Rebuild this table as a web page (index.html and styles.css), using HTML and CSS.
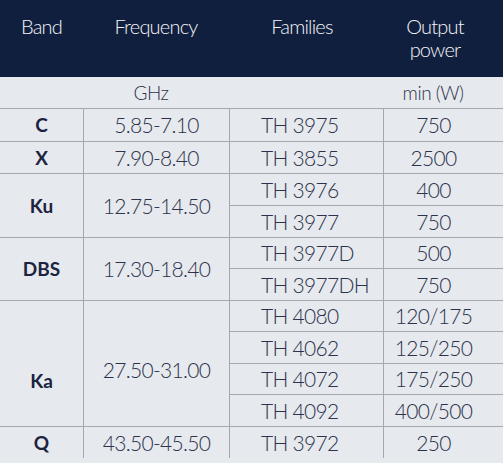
FILE: index.html
```html
<!DOCTYPE html>
<html>
<head>
<meta charset="utf-8">
<link rel="stylesheet" href="styles.css">
</head>
<body>
<table class="bands">
  <colgroup>
    <col class="c-band">
    <col class="c-freq">
    <col class="c-fam">
    <col class="c-pow">
  </colgroup>
  <thead>
    <tr class="head">
      <th>Band</th>
      <th>Frequency</th>
      <th class="fam-h">Families</th>
      <th class="pow">Output<br>power</th>
    </tr>
  </thead>
  <tbody>
    <tr class="units">
      <td></td>
      <td class="freq unit-ghz">GHz</td>
      <td></td>
      <td class="pow">min (W)</td>
    </tr>
    <tr class="h33">
      <td class="band">C</td>
      <td class="freq sep">5.85-7.10</td>
      <td class="fam sep">TH 3975</td>
      <td class="pow sep">750</td>
    </tr>
    <tr class="h32">
      <td class="band">X</td>
      <td class="freq sep">7.90-8.40</td>
      <td class="fam sep">TH 3855</td>
      <td class="pow sep">2500</td>
    </tr>
    <tr class="h32">
      <td class="band" rowspan="2">Ku</td>
      <td class="freq sep" rowspan="2">12.75-14.50</td>
      <td class="fam sep">TH 3976</td>
      <td class="pow sep">400</td>
    </tr>
    <tr class="h32">
      <td class="fam sep">TH 3977</td>
      <td class="pow sep">750</td>
    </tr>
    <tr class="h31">
      <td class="band" rowspan="2">DBS</td>
      <td class="freq sep" rowspan="2">17.30-18.40</td>
      <td class="fam sep">TH 3977D</td>
      <td class="pow sep">500</td>
    </tr>
    <tr class="h32">
      <td class="fam sep">TH 3977DH</td>
      <td class="pow sep">750</td>
    </tr>
    <tr class="h31">
      <td class="band ka" rowspan="4">Ka</td>
      <td class="freq sep ka-freq" rowspan="4">27.50-31.00</td>
      <td class="fam sep">TH 4080</td>
      <td class="pow sep">120/175</td>
    </tr>
    <tr class="h32">
      <td class="fam sep">TH 4062</td>
      <td class="pow sep">125/250</td>
    </tr>
    <tr class="h31">
      <td class="fam sep">TH 4072</td>
      <td class="pow sep">175/250</td>
    </tr>
    <tr class="h32">
      <td class="fam sep">TH 4092</td>
      <td class="pow sep">400/500</td>
    </tr>
    <tr class="h32">
      <td class="band">Q</td>
      <td class="freq sep">43.50-45.50</td>
      <td class="fam sep">TH 3972</td>
      <td class="pow sep">250</td>
    </tr>
  </tbody>
</table>
</body>
</html>
```
FILE: styles.css
```css
html, body {
  margin: 0;
  padding: 0;
  background: #e6e9ed;
  overflow: hidden;
}

.bands {
  width: 503px;
  table-layout: fixed;
  border-collapse: separate;
  border-spacing: 0;
  font-family: "Lato", "DejaVu Sans", sans-serif;
  font-weight: 300;
  color: #2c324b;
}

.c-band { width: 83px; }
.c-freq { width: 146px; }
.c-fam { width: 154px; }
.c-pow { width: 120px; }

.head th {
  background: #101f3e;
  color: #f4f5f8;
  font-weight: 300;
  font-size: 20px;
  letter-spacing: -0.8px;
  line-height: 23px;
  height: 77px;
  vertical-align: top;
  padding: 15px 0 0 0;
  box-sizing: border-box;
  text-align: center;
}

.head th.fam-h {
  padding-right: 8px;
}

.head th.pow {
  padding-right: 16px;
}

td {
  padding: 0;
  font-size: 21px;
  letter-spacing: -0.7px;
  line-height: 24px;
  vertical-align: middle;
  border-top: 1px solid #a3a8ae;
}

.units td {
  height: 31px;
  border-top: 0;
  font-size: 19px;
  letter-spacing: -0.5px;
}

.units .unit-ghz {
  padding-right: 10px;
}

.h33 { height: 33px; }
.h32 { height: 32px; }
.h31 { height: 31px; }

.sep {
  border-left: 1px solid #a3a8ae;
}

.band {
  text-align: center;
  font-weight: 700;
  font-size: 19px;
  letter-spacing: 0;
  color: #1b2340;
}

.freq {
  text-align: center;
}

.fam {
  text-align: left;
  padding-left: 31px;
}

.pow {
  text-align: center;
  padding-right: 20px;
}

.ka {
  padding-top: 34px;
}

.ka-freq {
  padding-top: 12px;
}
```
